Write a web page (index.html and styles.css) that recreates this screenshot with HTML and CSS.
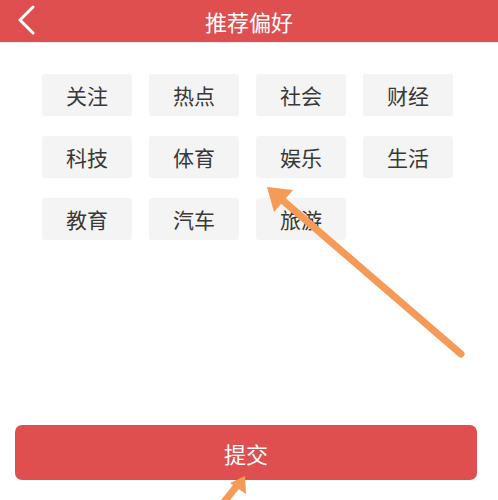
FILE: index.html
```html
<!DOCTYPE html>
<html lang="zh">
<head>
<meta charset="utf-8">
<title>推荐偏好</title>
<link rel="stylesheet" href="styles.css">
</head>
<body>
<div class="screen">
  <header class="topbar">
    <button class="back" aria-label="返回">
      <svg width="20" height="30" viewBox="0 0 20 30"><path d="M17 2 L4 15 L17 28" fill="none" stroke="#fff" stroke-width="3" stroke-linecap="round" stroke-linejoin="round"/></svg>
    </button>
    <h1 class="title">推荐偏好</h1>
  </header>

  <main class="tags">
    <span class="tag">关注</span>
    <span class="tag">热点</span>
    <span class="tag">社会</span>
    <span class="tag">财经</span>
    <span class="tag">科技</span>
    <span class="tag">体育</span>
    <span class="tag">娱乐</span>
    <span class="tag">生活</span>
    <span class="tag">教育</span>
    <span class="tag">汽车</span>
    <span class="tag">旅游</span>
  </main>

  <footer class="actions">
    <button class="submit">提交</button>
  </footer>

  <svg class="marks" width="498" height="500" viewBox="0 0 498 500">
    <g stroke="#f59a57" stroke-width="7" stroke-linecap="round" fill="#f59a57">
      <line x1="461" y1="354" x2="280" y2="198"/>
      <line x1="224" y1="502" x2="236" y2="487"/>
    </g>
    <g fill="#f59a57">
      <polygon points="267,187 293,190 274,212"/>
      <polygon points="245,476 246,494 230,483"/>
    </g>
  </svg>
</div>
</body>
</html>
```
FILE: styles.css
```css
* { box-sizing: border-box; }
html, body { margin: 0; padding: 0; background: #fff; }
body {
  font-family: "Noto Sans CJK SC", "Noto Sans", sans-serif;
  width: 498px;
  height: 500px;
  overflow: hidden;
}
.screen {
  position: relative;
  width: 498px;
  height: 500px;
  display: flex;
  flex-direction: column;
}
.topbar {
  height: 42px;
  background: #e04f50;
  display: flex;
  align-items: center;
  justify-content: center;
  position: relative;
  box-shadow: 0 1px 1px rgba(0,0,0,0.08);
}
.back {
  position: absolute;
  left: 14px;
  top: 4px;
  background: none;
  border: 0;
  padding: 0;
  width: 24px;
  height: 32px;
  display: flex;
  align-items: center;
  justify-content: center;
}
.title {
  margin: 0;
  font-size: 22px;
  font-weight: 400;
  color: #fff;
  line-height: 1;
  margin-top: -1px;
}
.tags {
  display: grid;
  grid-template-columns: repeat(4, 90px);
  column-gap: 17px;
  row-gap: 20px;
  padding: 32px 0 0 42px;
  flex: 1;
  align-content: start;
}
.tag {
  height: 42px;
  background: #f4f4f4;
  border-radius: 3px;
  color: #383838;
  font-size: 21px;
  display: flex;
  align-items: center;
  justify-content: center;
}
.actions {
  padding: 0 21px 20px 15px;
}
.submit {
  width: 100%;
  height: 55px;
  border: 0;
  border-radius: 7px;
  background: #e04f50;
  color: #fff;
  font-family: inherit;
  font-size: 22px;
  display: flex;
  align-items: center;
  justify-content: center;
}
.marks {
  position: absolute;
  left: 0;
  top: 0;
  pointer-events: none;
}
```
